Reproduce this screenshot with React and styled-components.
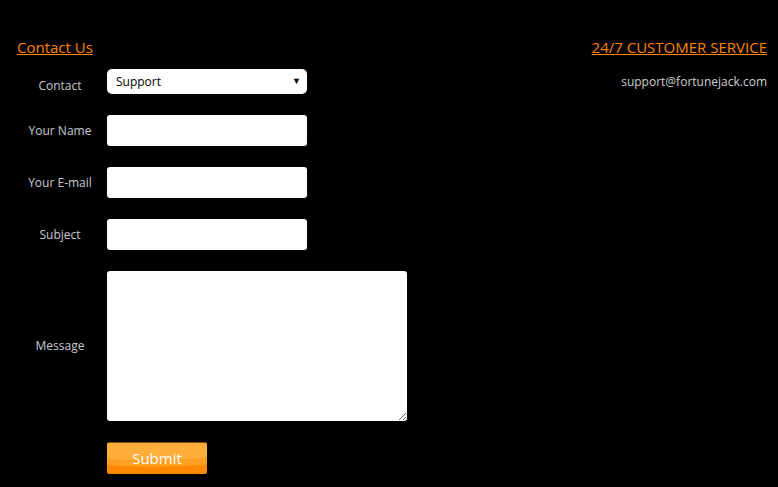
import React from "react";
import styled, { createGlobalStyle } from "styled-components";

const Global = createGlobalStyle`
  html, body { margin: 0; padding: 0; background: #000; }
  body { font-family: "Open Sans", "Liberation Sans", sans-serif; }
`;

const Page = styled.div`
  width: 778px;
  height: 487px;
  background: #000;
  box-sizing: border-box;
  padding: 37px 11px 0 17px;
  display: flex;
  justify-content: space-between;
  overflow: hidden;
`;

const Column = styled.div`
  display: flex;
  flex-direction: column;
  align-items: ${(p) => (p.$right ? "flex-end" : "flex-start")};
`;

const Heading = styled.a`
  color: #ff8400;
  font-size: 15px;
  line-height: 21px;
  text-decoration: underline;
  cursor: pointer;
`;

const Email = styled.div`
  color: #cfcfcf;
  font-size: 12px;
  line-height: 16px;
  margin-top: 16px;
`;

const Form = styled.form`
  display: flex;
  flex-direction: column;
  gap: 21px;
  margin-top: 11px;
`;

const Row = styled.div`
  display: flex;
  align-items: ${(p) => (p.$top ? "flex-start" : "center")};
`;

const Label = styled.label`
  width: 86px;
  margin-right: 4px;
  text-align: center;
  color: #c9ccd0;
  font-size: 12px;
  line-height: 16px;
  margin-top: ${(p) => p.$offset || 0}px;
`;

const SelectWrap = styled.div`
  position: relative;
  width: 200px;
  height: 25px;
`;

const Select = styled.select`
  appearance: none;
  width: 200px;
  height: 25px;
  border: none;
  border-radius: 5px;
  background: #fff;
  font-family: "Open Sans", "Liberation Sans", sans-serif;
  font-size: 12px;
  color: #000;
  padding: 0 0 0 9px;
  margin: 0;
  outline: none;
`;

const Arrow = styled.span`
  position: absolute;
  right: 6px;
  top: 6px;
  font-size: 9px;
  line-height: 12px;
  color: #000;
  pointer-events: none;
`;

const Input = styled.input`
  width: 200px;
  height: 31px;
  box-sizing: border-box;
  border: none;
  border-radius: 3px;
  background: #fff;
  margin: 0;
  padding: 0 6px;
  font-family: "Open Sans", "Liberation Sans", sans-serif;
  font-size: 12px;
  outline: none;
`;

const Textarea = styled.textarea`
  width: 300px;
  height: 150px;
  box-sizing: border-box;
  border: none;
  border-radius: 3px;
  background: #fff;
  margin: 0;
  padding: 4px 6px;
  font-family: "Open Sans", "Liberation Sans", sans-serif;
  font-size: 12px;
  outline: none;
  display: block;
`;

const Submit = styled.button`
  margin-left: 90px;
  width: 100px;
  height: 32px;
  box-sizing: border-box;
  border: none;
  border-top: 1px solid #8a4f00;
  border-radius: 2px;
  padding: 0 0 2px;
  color: #fff;
  font-family: "Open Sans", "Liberation Sans", sans-serif;
  font-size: 15px;
  line-height: 28px;
  cursor: pointer;
  background:
    radial-gradient(ellipse 170px 32px at 40% -6px, #ffad3b 0 72%, transparent 73%),
    radial-gradient(ellipse 180px 36px at 45% -4px, #ff9f22 0 76%, transparent 77%),
    linear-gradient(#ff9414, #ff8600);
`;

export default function App() {
  return (
    <>
      <Global />
      <Page>
        <Column>
          <Heading>Contact Us</Heading>
          <Form onSubmit={(e) => e.preventDefault()}>
            <Row $top>
              <Label $offset={9}>Contact</Label>
              <SelectWrap>
                <Select defaultValue="Support">
                  <option>Support</option>
                </Select>
                <Arrow>▼</Arrow>
              </SelectWrap>
            </Row>
            <Row>
              <Label>Your Name</Label>
              <Input type="text" />
            </Row>
            <Row>
              <Label>Your E-mail</Label>
              <Input type="text" />
            </Row>
            <Row>
              <Label>Subject</Label>
              <Input type="text" />
            </Row>
            <Row>
              <Label>Message</Label>
              <Textarea />
            </Row>
            <Row>
              <Submit type="submit">Submit</Submit>
            </Row>
          </Form>
        </Column>
        <Column $right>
          <Heading>24/7 CUSTOMER SERVICE</Heading>
          <Email>support@fortunejack.com</Email>
        </Column>
      </Page>
    </>
  );
}
